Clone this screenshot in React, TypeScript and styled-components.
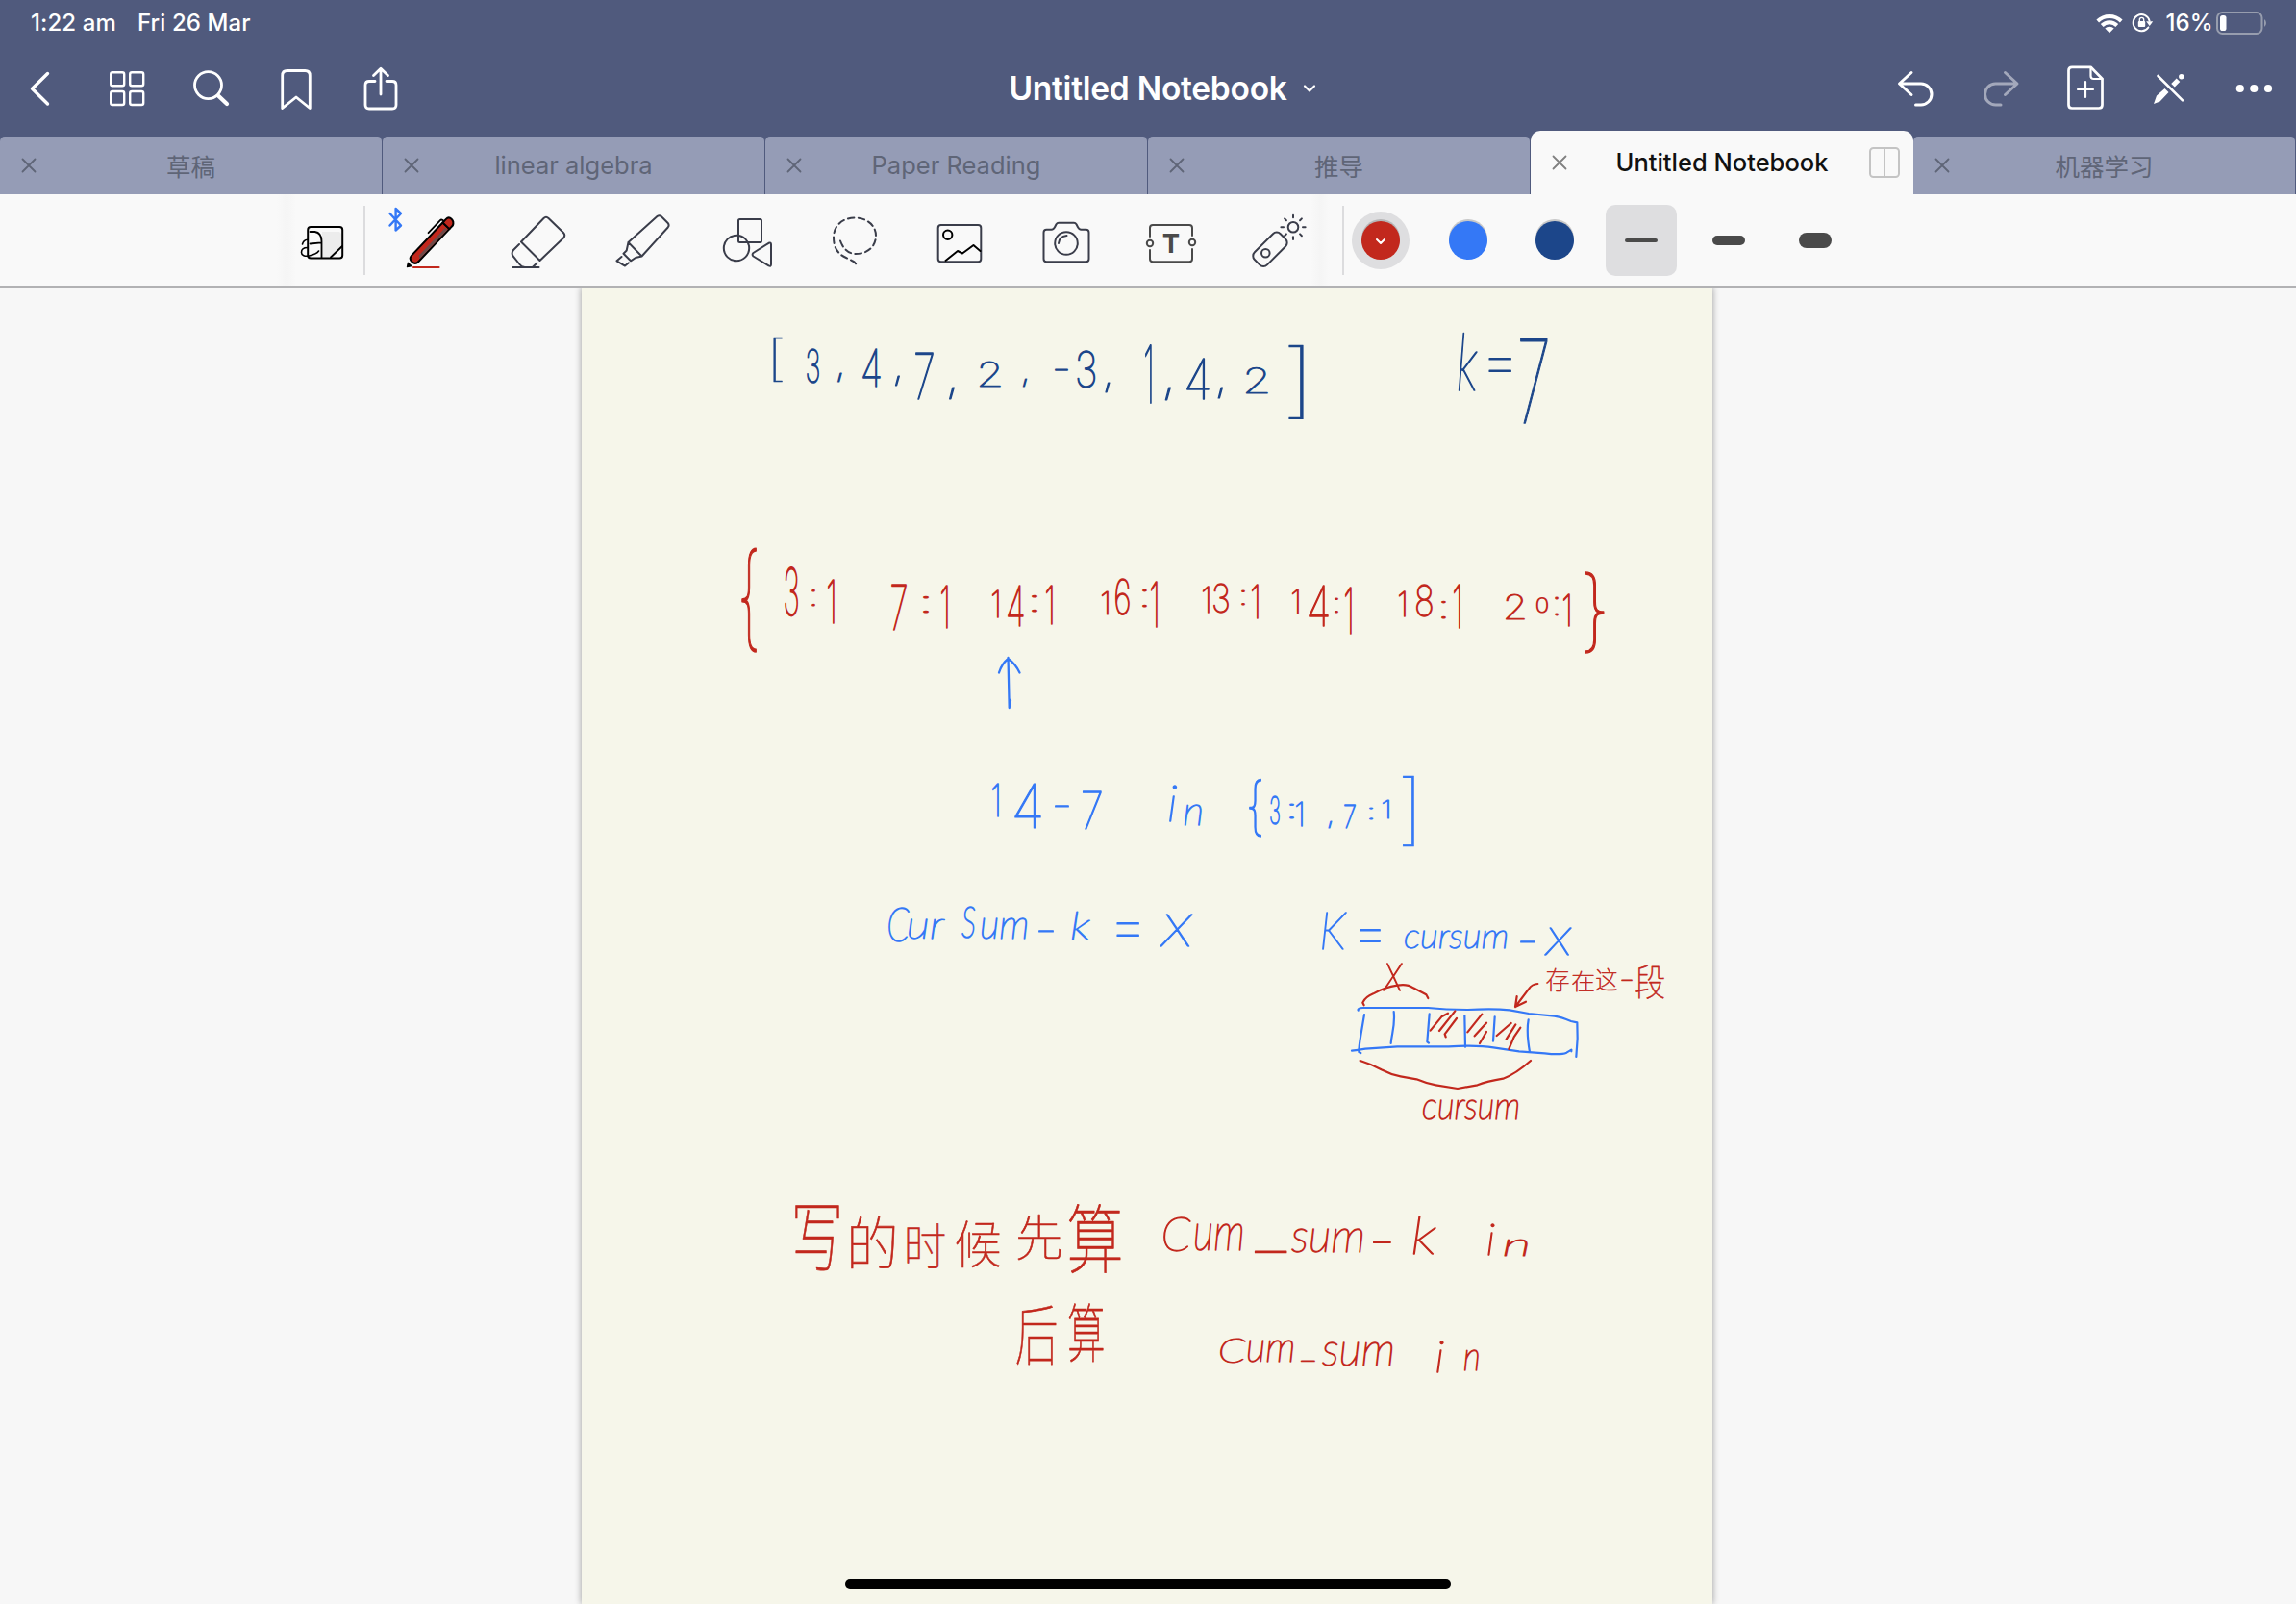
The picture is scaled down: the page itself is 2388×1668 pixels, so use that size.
import React from 'react';
import styled, { createGlobalStyle } from 'styled-components';

const NAVY = '#1c468a';
const RED = '#c2281d';
const BLUE = '#3478f6';

const GlobalStyle = createGlobalStyle`
  html, body { margin: 0; padding: 0; }
  body {
    width: 2388px;
    height: 1668px;
    overflow: hidden;
    background: #f7f7f7;
    font-family: Inter, "Noto Sans CJK SC", sans-serif;
  }
`;

const Screen = styled.div`
  width: 2388px;
  height: 1668px;
  display: flex;
  flex-direction: column;
  overflow: hidden;
`;

const Header = styled.header`
  background: #505a7d;
  height: 202px;
  display: flex;
  flex-direction: column;
  color: #fff;
`;

const StatusBar = styled.div`
  height: 48px;
  box-sizing: border-box;
  padding: 0 28px 0 32px;
  display: flex;
  align-items: center;
  justify-content: space-between;
  font-size: 24px;
  line-height: 48px;
  font-weight: 500;
`;

const StatusGroup = styled.div<{ $gap: number }>`
  display: flex;
  align-items: center;
  gap: ${(p) => p.$gap}px;
  white-space: nowrap;
`;

const StatusText = styled.span<{ $w: number }>`
  width: ${(p) => p.$w}px;
  letter-spacing: 0.1px;
`;

const NavBar = styled.div`
  height: 88px;
  display: flex;
  align-items: center;
`;

const NavGroup = styled.div`
  width: 440px;
  display: flex;
`;

const TitleArea = styled.div`
  flex: 1;
  display: flex;
  align-items: center;
  justify-content: center;
`;

const Title = styled.h1`
  margin: 0;
  font-size: 33.5px;
  line-height: 40px;
  font-weight: 600;
  letter-spacing: -0.25px;
  white-space: nowrap;
`;

const TitleChevron = styled.svg`
  width: 16px;
  height: 12px;
  margin-left: 15px;
  margin-right: -31px;
`;

const TabStrip = styled.div`
  height: 66px;
  display: flex;
  align-items: flex-end;
`;

const TabBox = styled.div<{ $active?: boolean }>`
  width: 398px;
  height: ${(p) => (p.$active ? 66 : 60)}px;
  box-sizing: border-box;
  padding: 0 14px 0 22px;
  border-radius: ${(p) => (p.$active ? '10px 10px 0 0' : '5px 5px 0 0')};
  border-right: ${(p) => (p.$active ? 'none' : '1px solid #505a7d')};
  background: ${(p) => (p.$active ? '#f9f9f9' : '#959cb6')};
  color: ${(p) => (p.$active ? '#111' : '#5f6577')};
  display: grid;
  grid-template-columns: 32px 1fr 40px;
  align-items: center;
  font-size: 25.5px;
  font-weight: ${(p) => (p.$active ? 500 : 400)};

  & > svg:last-child:not(:first-child) {
    justify-self: end;
  }
`;

const TabLabel = styled.span`
  text-align: center;
  white-space: nowrap;
  padding-bottom: 2px;
`;

const Toolbar = styled.div`
  height: 97px;
  box-sizing: border-box;
  border-bottom: 2px solid #b2b2b4;
  background: #f9f9f9;
  display: flex;
  align-items: center;
  flex: none;
`;

const EdgeFade = styled.div<{ $before: number }>`
  width: 20px;
  height: 100%;
  margin-left: ${(p) => p.$before}px;
  background: linear-gradient(90deg, #f9f9f9, #f5f5f5 50%, #f9f9f9);
`;

const Divider = styled.div<{ $before?: number }>`
  width: 2px;
  height: 72px;
  margin-left: ${(p) => p.$before ?? 0}px;
  background: #dcdcde;
`;

const ToolRow = styled.div`
  display: flex;
  margin-left: 13px;
  width: 990px;
  flex: none;
`;

const OptionRow = styled.div`
  display: flex;
  margin-left: -7px;
`;

const OptionSlot = styled.div`
  width: 90.4px;
  display: flex;
  align-items: center;
  justify-content: center;
`;

const Halo = styled.div<{ $on?: boolean }>`
  width: 60px;
  height: 60px;
  border-radius: 50%;
  background: ${(p) => (p.$on ? '#dedee0' : 'transparent')};
  display: flex;
  align-items: center;
  justify-content: center;
`;

const Swatch = styled.div<{ $color: string }>`
  width: 40px;
  height: 40px;
  border-radius: 50%;
  background: ${(p) => p.$color};
  box-shadow: 0 -2px 0 rgba(110, 110, 110, 0.35);
  display: flex;
  align-items: center;
  justify-content: center;
`;

const WidthButton = styled.div<{ $on?: boolean }>`
  width: 74px;
  height: 74px;
  border-radius: 10px;
  background: ${(p) => (p.$on ? '#dedee0' : 'transparent')};
  display: flex;
  align-items: center;
  justify-content: center;
`;

const WidthMark = styled.div<{ $h: number }>`
  width: 34px;
  height: ${(p) => p.$h}px;
  border-radius: ${(p) => p.$h / 2}px;
  background: #4a4a4a;
`;

const Workspace = styled.main`
  flex: 1;
  display: flex;
  justify-content: center;
  background: #f7f7f7;
  position: relative;
  overflow: hidden;
`;

const Paper = styled.div`
  width: 1176px;
  margin-right: 2px;
  background: #f6f6ea;
  box-shadow: 0 0 7px rgba(0, 0, 0, 0.38);
`;

const InkLayer = styled.svg`
  display: block;
  fill: none;
  stroke-linecap: round;
  stroke-linejoin: round;
`;

const HomeIndicator = styled.div`
  position: absolute;
  left: 879px;
  bottom: 16px;
  width: 630px;
  height: 10px;
  border-radius: 5px;
  background: #000;
`;

const Glyph = styled.svg`
  display: block;
  flex: none;
  fill: none;
  stroke-linecap: round;
  stroke-linejoin: round;
`;

/* ---------- icons ---------- */

type IconProps = { x: number; y: number; w: number; h: number; color?: string; sw?: number; children: React.ReactNode };

const Icon = ({ x, y, w, h, color = '#fff', sw = 3, children }: IconProps) => (
  <Glyph width={w} height={h} viewBox={`${x} ${y} ${w} ${h}`} stroke={color} strokeWidth={sw}>
    {children}
  </Glyph>
);

const NavIcon = ({ slot, color, children }: { slot: number; color?: string; children: React.ReactNode }) => (
  <Icon x={slot} y={48} w={88} h={88} color={color}>
    {children}
  </Icon>
);

const ToolIcon = ({ index, color = '#3a3d4a', children }: { index: number; color?: string; children: React.ReactNode }) => (
  <Icon x={393 + index * 110} y={202} w={110} h={95} color={color} sw={2}>
    {children}
  </Icon>
);

const CloseIcon = ({ dark }: { dark?: boolean }) => (
  <Icon x={0} y={0} w={16} h={16} color={dark ? '#808080' : '#5f6577'} sw={1.8}>
    <path d="M1.5 1.5 14.5 14.5M14.5 1.5 1.5 14.5" />
  </Icon>
);

const SplitIcon = () => (
  <Icon x={0} y={0} w={32} h={32} color="#c4c4c4" sw={2}>
    <rect x="1" y="1" width="30" height="30" rx="3.5" />
    <path d="M16 1V31" />
  </Icon>
);

const StatusIcons = () => (
  <Icon x={2178} y={0} w={64} h={48} sw={0}>
    <g fill="#fff">
      <path d="M2180.4 20.6a19.3 19.3 0 0 1 27.2 0l-2.7 2.9a15.5 15.5 0 0 0-21.8 0z" />
      <path d="M2184.8 25.1a13 13 0 0 1 18.4 0l-2.8 2.9a9.1 9.1 0 0 0-12.8 0z" />
      <path d="M2189.3 29.6a6.6 6.6 0 0 1 9.4 0l-4.7 4.6z" />
      <rect x="2223.8" y="22" width="7.4" height="6" rx="1" />
      <path d="M2232.2 22.3h7l-3.5 4.6z" />
    </g>
    <path d="M2225.3 22v-1.4a2.2 2.2 0 0 1 4.4 0v1.4" stroke="#fff" strokeWidth="1.3" />
    <path d="M2235.6 21.8a8.6 8.6 0 1 0-1.2 6.6" stroke="#fff" strokeWidth="1.9" />
  </Icon>
);

const BatteryIcon = () => (
  <Icon x={2304} y={10} w={56} h={28} sw={2}>
    <rect x="2306" y="13" width="46.5" height="22" rx="5.5" stroke="#979dae" />
    <rect x="2309" y="16" width="6.5" height="16" rx="2.6" fill="#fff" stroke="none" />
    <path d="M2355 20a5 5 0 0 1 0 8z" fill="#979dae" stroke="none" />
  </Icon>
);

const LeftNav = () => (
  <NavGroup>
    <NavIcon slot={0}><path d="M49.5 76.5 33.5 92.3 49.5 108" strokeWidth="3.4" /></NavIcon>
    <NavIcon slot={88}>
      {[115.2, 135.2].map((x) => [75.2, 95].map((y) => (
        <rect key={`${x}-${y}`} x={x} y={y} width="14" height="14" rx="2" strokeWidth="2.4" />
      )))}
    </NavIcon>
    <NavIcon slot={176}>
      <circle cx="216.5" cy="88.6" r="14" strokeWidth="2.8" />
      <path d="M227 99.5 236 108" strokeWidth="4.2" />
    </NavIcon>
    <NavIcon slot={264}>
      <path d="M293.7 112.5V78.5q0-5 5-5h18.6q5 0 5 5v34L308 101z" strokeWidth="2.8" />
    </NavIcon>
    <NavIcon slot={352}>
      <path d="M390 84.5h-6q-4 0-4 4v20.5q0 4 4 4h24q4 0 4-4V88.5q0-4-4-4h-6M396 98V72M388.5 78.5 396 71.3 403.5 78.5" strokeWidth="2.8" />
    </NavIcon>
  </NavGroup>
);

const RightNav = () => (
  <NavGroup>
    <NavIcon slot={1948}>
      <path d="M1988 75.5 1975.5 87 1988 98.5M1976 87h22a11 11 0 0 1 0 22h-5.5" strokeWidth="3" />
    </NavIcon>
    <NavIcon slot={2036} color="#a3a8bb">
      <path d="M2085.5 75.5 2098 87 2085.5 98.5M2097.5 87h-22a11 11 0 0 0 0 22h5.5" strokeWidth="3" />
    </NavIcon>
    <NavIcon slot={2124}>
      <path d="M2155 69.8h19.5L2186.5 82v27q0 3.5-3.5 3.5h-28q-3.5 0-3.5-3.5V73.3q0-3.5 3.5-3.5z" strokeWidth="2.7" />
      <path d="M2174.5 70v9q0 3 3 3h9M2169 85v16M2161 93h16" strokeWidth="2.2" />
    </NavIcon>
    <NavIcon slot={2212}>
      <path d="M2240 108l3-8.5L2251.5 92l4 4-9 9.5zM2258.2 87l5.5-5.5 3.6 3.6-5.5 5.5z" fill="#fff" strokeWidth="0" />
      <circle cx="2268.8" cy="79.7" r="2.7" fill="#fff" strokeWidth="0" />
      <path d="M2244.5 79 2270 104.3" strokeWidth="2.6" />
    </NavIcon>
    <NavIcon slot={2300}>
      {[2329.8, 2344.3, 2359].map((cx) => (
        <circle key={cx} cx={cx} cy="92" r="4.1" fill="#fff" strokeWidth="0" />
      ))}
    </NavIcon>
  </NavGroup>
);

const StickerIcon = () => (
  <Icon x={308} y={202} w={70} h={95} color="#000" sw={2}>
    <path d="M335 241h18l3 3v12l-12 12h-9z" fill="#ececec" stroke="none" />
    <rect x="320.2" y="236" width="36" height="32.4" rx="3" />
    <path d="M322.5 241h5q7 1 7 10v17M322.5 253.5l11.500-1.2M344 267.500l12-11.500" strokeWidth="1.8" />
    <path d="M314.5 254q1-4.500 5.500-4.800M320 257.500c-4 0-6.500 2-6.500 5s3.500 4.500 8 3.500 8-2 10-5" strokeWidth="1.6" />
  </Icon>
);

const RAYS = [0, 45, 90, 135, 180, 225, 270, 315];

const Tools = () => (
  <ToolRow>
    <ToolIcon index={0}>
      <path d="M405.500 222 417 234.500 411.600 239.500V217L417 222 405.500 234.500" stroke={BLUE} strokeWidth="2.4" />
      <g transform="translate(448.8 250.8) rotate(-46.5)" stroke="#000">
        <path d="M-25-4.8H22V4.8H-25Q-29.500 4.8-29.500 0T-25-4.800z" fill={RED} />
        <path d="M-20 .8H20V3.800H-22z" fill="#6e4a48" stroke="none" />
        <path d="M22-4.800h5q4 0 4 4t-4 5.600h-5z" fill={RED} />
        <path d="M4-8.300H22Q24-8.300 24-5" strokeWidth="1.8" />
        <path d="M-33-2.500-37 0-33 3z" fill="#000" strokeWidth="1" />
      </g>
      <path d="M430 278H456.500" stroke={RED} strokeWidth="2.2" />
    </ToolIcon>
    <ToolIcon index={1}>
      <path d="M542 251.500 565.500 227q2.500-2.500 5 0L586 242q2.500 2.700 0 5.500L561.500 271zM540 254l-6 6q-2.500 3-.5 6.200l7 8.800q2 2.500 4.500 2.800M558.500 273.500l-4.500 4.200M533.500 278H560.500" />
    </ToolIcon>
    <ToolIcon index={2}>
      <path d="M653.500 252 683.500 225q2.300-1.800 4.500.3l6.700 6.700q1.800 2.200 0 4.500L667.500 266.500zM653.500 252l-1.800 8.500-3.200 3.200 7.500 7.600 5-3.300 6.500-1.500M646.500 267l-5 4.300 8.500 5.300 4-3.300" />
    </ToolIcon>
    <ToolIcon index={3}>
      <rect x="768" y="228" width="24" height="24" rx="1.5" />
      <circle cx="766" cy="258" r="13.2" />
      <path d="M783.500 263 799.500 252.800q2.500-1 2.500 1.500V275q0 2.500-2.500 1.300L783.500 266.500q-1.800-1.700 0-3.500z" />
    </ToolIcon>
    <ToolIcon index={4}>
      <path d="M874 250.500C877 259 883 264 890 264 903 264 911 256 911 245S901 226.500 889 226.500C876 226.500 867 235 867 247c0 10 4 17 13 21l6 3q5 2 5 7" strokeDasharray="6.5 4.3" />
    </ToolIcon>
    <ToolIcon index={5}>
      <rect x="975.7" y="234" width="44.6" height="38.3" rx="3" />
      <g stroke="#000">
        <circle cx="985.7" cy="244.3" r="4.7" />
        <path d="M983.500 271 996 261l5 2.500L1012.500 255l7 6" />
      </g>
    </ToolIcon>
    <ToolIcon index={6}>
      <path d="M1088.500 238.700h5q2.500 0 3.500-2.500l1.500-3q1-1.500 2.500-1.500h16q1.500 0 2.500 1.500l1.500 3q1 2.500 3.500 2.500h5q3 0 3 3v27.600q0 3-3 3h-41q-3 0-3-3V241.700q0-3 3-3z" />
      <circle cx="1109" cy="253" r="11.8" />
      <path d="M1101 253q.5-7 8.500-8" />
    </ToolIcon>
    <ToolIcon index={7} color="#4a4a4a">
      <path d="M1196 246V237q0-3 3-3h38q3 0 3 3v8M1240 259v10.300q0 3-3 3h-38q-3 0-3-3V260" />
      <circle cx="1196" cy="253" r="3.2" />
      <circle cx="1240" cy="252" r="3.2" />
      <text x="1218" y="263" textAnchor="middle" fontSize="27.5" fontWeight="700" fill="#4a4a4a" stroke="none">T</text>
    </ToolIcon>
    <ToolIcon index={8}>
      <rect x="1302" y="250" width="38" height="18.5" rx="5.5" transform="rotate(-45 1321 259.3)" />
      <circle cx="1316.3" cy="263.3" r="4.3" />
      <circle cx="1345" cy="236.3" r="5.3" />
      {RAYS.map((a) => (
        <path key={a} d="M1355 236.300h2.600" transform={`rotate(${a} 1345 236.3)`} />
      ))}
    </ToolIcon>
  </ToolRow>
);

/* ---------- handwriting ---------- */

const FACES = {
  digit: '100 100px Inter',
  latin: 'italic 100 100px Lato',
  han: '100 100px "Noto Sans CJK SC"',
};
type Face = keyof typeof FACES;

const FACE_PROPS: Record<Face, { fontFamily: string; fontStyle: string; fontWeight: number }> = {
  digit: { fontFamily: 'Inter, sans-serif', fontStyle: 'normal', fontWeight: 100 },
  latin: { fontFamily: 'Lato, sans-serif', fontStyle: 'italic', fontWeight: 100 },
  han: { fontFamily: '"Noto Sans CJK SC", sans-serif', fontStyle: 'normal', fontWeight: 100 },
};

const ruler = document.createElement('canvas').getContext('2d')!;

/* text, left, right, top, bottom */
type Mark = [string, number, number, number, number];

const faceOf = (t: string): Face => (/[\u4e00-\u9fff]/.test(t) ? 'han' : /[a-z]/i.test(t) ? 'latin' : 'digit');

/* How far a piece may be widened before its pen stroke looks too heavy. */
const maxStretch = (t: string) => (/^[[\]{}]$/.test(t) ? 1.5 : t === 'i' || t === ',' ? 1.15 : 2.2);

/* Writes a piece of text so that its ink fills the given box. */
const Written = ({ mark }: { mark: Mark }) => {
  const [text, x0, x1, y0, y1] = mark;
  const face = faceOf(text);
  ruler.font = FACES[face];
  const m = ruler.measureText(text);
  const inkW = m.actualBoundingBoxLeft + m.actualBoundingBoxRight;
  const inkH = m.actualBoundingBoxAscent + m.actualBoundingBoxDescent;
  const flat = /^[-=_]$/.test(text);
  const w = Math.max(x1 - x0, text === '1' ? 7 : 4) - 1;
  const h = Math.max(y1 - y0 - 1, 1);
  const size = flat ? (w / inkW) * 100 : (h / inkH) * 100;
  const k = size / 100;
  const sx = flat ? 1 : Math.min(w / (inkW * k), maxStretch(text));
  const drawn = inkW * k * sx;
  const baseline = flat
    ? (y0 + y1) / 2 + ((m.actualBoundingBoxAscent - m.actualBoundingBoxDescent) / 2) * k
    : y1 - 0.5 - m.actualBoundingBoxDescent * k;
  const inkStart = text === '1' || text === ']' ? x1 - 0.5 - drawn : (x0 + x1 - drawn) / 2;
  const left = inkStart + m.actualBoundingBoxLeft * k * sx;
  const pen = face === 'han' ? 0.6 : face === 'latin' ? 1.4 : 1.2;
  const strokeWidth = /^[[\]]$/.test(text) ? 0.4 : pen / Math.sqrt(Math.min(sx, 1.4));
  return (
    <text
      {...FACE_PROPS[face]}
      fontSize={size}
      strokeWidth={strokeWidth}
      transform={`translate(${left} ${baseline}) scale(${sx} 1)`}
    >
      {text}
    </text>
  );
};

const navyMarks: Mark[] = [
  ['[', 799, 819, 350, 397], ['3', 839, 852, 362, 399], [',', 871, 876, 388, 398], ['4', 897, 916, 362, 402],
  [',', 930, 937, 390, 401], ['7', 952, 971, 366, 415], [',', 985, 995, 403, 416], ['2', 1019, 1041, 375, 402],
  [',', 1063, 1069, 394, 403], ['-', 1097, 1111, 384, 384], ['3', 1120, 1139, 364, 404], [',', 1148, 1156, 397, 408],
  ['1', 1192, 1198, 358, 419], [',', 1210, 1220, 402, 416], ['4', 1234, 1258, 372, 415], [',', 1264, 1275, 403, 415],
  ['2', 1296, 1319, 381, 409], [']', 1332, 1357, 357, 436],
  ['k', 1517, 1537, 345, 406], ['=', 1548, 1572, 372, 388], ['7', 1581, 1610, 351, 440],
];

const redMarks: Mark[] = [
  ['{', 771, 787, 569, 679], ['3', 816, 830, 589, 641], [':', 844, 848, 612, 630], ['1', 862, 868, 602, 648],
  ['7', 927, 943, 607, 655], [':', 960, 966, 619, 637], ['1', 980, 986, 608, 653],
  ['1', 1034, 1039, 613, 642], ['4', 1048, 1065, 608, 651], [':', 1073, 1079, 618, 636], ['1', 1089, 1095, 608, 649],
  ['1', 1148, 1153, 614, 639], ['6', 1160, 1175, 601, 640], [':', 1188, 1193, 612, 631], ['1', 1199, 1204, 604, 652],
  ['1', 1253, 1258, 609, 637], ['3', 1262, 1278, 606, 638], [':', 1291, 1295, 613, 629], ['1', 1303, 1309, 607, 643],
  ['1', 1346, 1351, 612, 638], ['4', 1361, 1382, 608, 651], [':', 1388, 1392, 621, 637], ['1', 1401, 1406, 610, 659],
  ['1', 1457, 1462, 614, 641], ['8', 1473, 1490, 607, 642], [':', 1499, 1504, 624, 643], ['1', 1512, 1519, 607, 653],
  ['2', 1566, 1586, 617, 644], ['0', 1598, 1610, 621, 638], [':', 1617, 1621, 620, 640], ['1', 1627, 1633, 617, 651],
  ['}', 1648, 1669, 593, 679],
  ['x', 1438, 1459, 1002, 1030],
  ['存', 1608, 1632, 1007, 1032], ['在', 1635, 1658, 1009, 1031], ['这', 1660, 1682, 1006, 1030], ['一', 1686, 1698, 1018, 1020], ['段', 1701, 1731, 1003, 1039],
  ['cursum', 1480, 1579, 1143, 1165],
  ['写', 827, 873, 1253, 1321], ['的', 885, 931, 1264, 1320], ['时', 943, 983, 1272, 1319], ['候', 994, 1040, 1269, 1319], ['先', 1058, 1104, 1262, 1311], ['算', 1111, 1166, 1252, 1325],
  ['C', 1210, 1239, 1265, 1302], ['um', 1243, 1292, 1272, 1301], ['_', 1305, 1339, 1302, 1302], ['sum', 1343, 1417, 1277, 1303],
  ['-', 1428, 1447, 1292, 1292], ['k', 1470, 1494, 1264, 1304], ['i', 1543, 1559, 1272, 1305], ['n', 1565, 1589, 1288, 1306],
  ['后', 1057, 1099, 1357, 1420], ['算', 1111, 1148, 1355, 1417],
  ['C', 1269, 1296, 1391, 1418], ['um', 1298, 1345, 1394, 1417], ['_', 1353, 1368, 1415, 1415], ['sum', 1375, 1448, 1396, 1421],
  ['i', 1492, 1504, 1393, 1427], ['n', 1523, 1538, 1403, 1425],
];

const blueMarks: Mark[] = [
  ['1', 1033, 1039, 814, 849], ['4', 1055, 1083, 814, 861], ['-', 1097, 1112, 838, 838], ['7', 1126, 1146, 822, 862],
  ['i', 1214, 1226, 816, 854], ['n', 1232, 1250, 836, 858],
  ['{', 1299, 1312, 810, 871], ['3', 1321, 1331, 828, 858], [':', 1341, 1346, 835, 851], ['1', 1350, 1355, 833, 859],
  [',', 1381, 1386, 853, 861], ['7', 1398, 1410, 836, 861], [':', 1424, 1428, 839, 852], ['1', 1440, 1445, 831, 851], [']', 1458, 1472, 806, 881],
  ['C', 924, 946, 943, 980], ['ur', 945, 983, 955, 977], ['S', 1000, 1014, 942, 976], ['um', 1021, 1068, 955, 977],
  ['-', 1080, 1096, 968, 968], ['k', 1115, 1134, 947, 977], ['=', 1161, 1185, 960, 973], ['x', 1206, 1241, 951, 984],
  ['K', 1375, 1401, 947, 987], ['=', 1414, 1436, 967, 979], ['cursum', 1461, 1567, 967, 987], ['-', 1581, 1597, 979, 979], ['x', 1606, 1635, 965, 993],
];

const InkText = ({ marks, color }: { marks: Mark[]; color: string }) => (
  <g fill={color} stroke={color}>
    {marks.map((m, i) => (
      <Written key={i} mark={m} />
    ))}
  </g>
);

const ArrayDiagram = () => (
  <g transform="translate(1340 920) scale(.33333)" strokeWidth="6.6">
    <g stroke={BLUE}>
      <path d="M218 392Q215 385 232 384L436 384Q490 390 560 390 640 386 690 391L750 402 830 410Q850 413 882 426L901 430 902 480 898 537" />
      <path d="M198 518Q215 516 240 512L340 505 500 505Q590 500 640 508L720 520 800 526Q850 532 868 524L883 515V520" />
      <path d="M237 405 226 470Q220 505 220 522L226 525M329 396C334 440 322 465 320 495M440 403 433 490 438 494M550 408 552 506M644 412 639 488M749 421Q742 460 753 522" />
    </g>
    <g stroke={RED}>
      <path d="M236 376 232 368Q240 350 265 340 300 320 340 314 370 308 390 322L430 343 436 354" />
      <path d="M498 401 478 412 443 455M520 394 471 456M525 417 488 466 491 475M604 404 559 460M618 431 581 472M618 459 597 495M695 432 650 471M709 436 680 482M724 446 704 475 688 513" />
      <path d="M224 549Q260 560 290 577 320 593 350 598L400 607Q430 620 460 625L528 636 590 625Q620 613 670 605 710 590 756 549" />
      <path d="M778 309Q760 310 750 325L708 381M713 348 708 381 741 365" />
    </g>
  </g>
);

const Notes = () => (
  <InkLayer width={1176} height={1369} viewBox="605 299 1176 1369">
    <InkText marks={navyMarks} color={NAVY} />
    <InkText marks={redMarks} color={RED} />
    <InkText marks={blueMarks} color={BLUE} />
    <path d="M1048.500 684 1049.700 736 1051 728M1039 699.500Q1042 690 1048.500 685 1056 690 1060.500 699.500" stroke={BLUE} strokeWidth="2.3" />
    <ArrayDiagram />
  </InkLayer>
);

/* ---------- page ---------- */

const TABS = [
  { label: '草稿' },
  { label: 'linear algebra' },
  { label: 'Paper Reading' },
  { label: '推导' },
  { label: 'Untitled Notebook', active: true },
  { label: '机器学习' },
];

const App = () => (
  <Screen>
    <GlobalStyle />
    <Header>
      <StatusBar>
        <StatusGroup $gap={20}>
          <StatusText $w={91}>1:22 am</StatusText>
          <StatusText $w={120}>Fri 26 Mar</StatusText>
        </StatusGroup>
        <StatusGroup $gap={4}>
          <StatusIcons />
          <StatusGroup $gap={0}>
            <StatusText $w={58}>&nbsp;16%</StatusText>
            <BatteryIcon />
          </StatusGroup>
        </StatusGroup>
      </StatusBar>
      <NavBar>
        <LeftNav />
        <TitleArea>
          <Title>Untitled Notebook</Title>
          <TitleChevron viewBox="0 0 16 12" fill="none" stroke="#fff" strokeWidth="2.2" strokeLinecap="round" strokeLinejoin="round">
            <path d="M3 3.500 8 8.500 13 3.500" />
          </TitleChevron>
        </TitleArea>
        <RightNav />
      </NavBar>
      <TabStrip>
        {TABS.map((t) => (
          <TabBox key={t.label} $active={t.active}>
            <CloseIcon dark={t.active} />
            <TabLabel>{t.label}</TabLabel>
            {t.active && <SplitIcon />}
          </TabBox>
        ))}
      </TabStrip>
    </Header>
    <Toolbar>
      <EdgeFade $before={288} />
      <StickerIcon />
      <Divider />
      <Tools />
      <EdgeFade $before={-20} />
      <Divider $before={13} />
      <OptionRow>
        <OptionSlot>
          <Halo $on>
            <Swatch $color={RED}>
              <Glyph width={12} height={12} viewBox="0 0 12 12" stroke="#fff" strokeWidth={2}>
                <path d="M2 5 6 9 10 5" />
              </Glyph>
            </Swatch>
          </Halo>
        </OptionSlot>
        <OptionSlot><Halo><Swatch $color={BLUE} /></Halo></OptionSlot>
        <OptionSlot><Halo><Swatch $color={NAVY} /></Halo></OptionSlot>
        <OptionSlot><WidthButton $on><WidthMark $h={4} /></WidthButton></OptionSlot>
        <OptionSlot><WidthButton><WidthMark $h={10} /></WidthButton></OptionSlot>
        <OptionSlot><WidthButton><WidthMark $h={16} /></WidthButton></OptionSlot>
      </OptionRow>
    </Toolbar>
    <Workspace>
      <Paper>
        <Notes />
      </Paper>
      <HomeIndicator />
    </Workspace>
  </Screen>
);

export default App;
